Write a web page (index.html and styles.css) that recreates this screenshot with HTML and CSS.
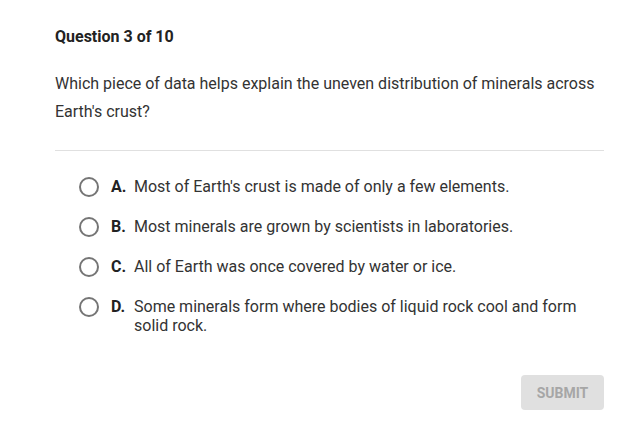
FILE: index.html
```html
<!DOCTYPE html>
<html lang="en">
<head>
    <meta charset="UTF-8">
    <title>Question 3 of 10</title>
    <link rel="stylesheet" href="styles.css">
</head>
<body>
    <div class="quiz">
        <h2 class="quiz-title">Question 3 of 10</h2>
        <p class="quiz-question">Which piece of data helps explain the uneven distribution of minerals across Earth's crust?</p>
        <hr class="divider">
        <ul class="options">
            <li class="option">
                <span class="radio"></span>
                <span class="letter">A.</span>
                <span class="text">Most of Earth's crust is made of only a few elements.</span>
            </li>
            <li class="option">
                <span class="radio"></span>
                <span class="letter">B.</span>
                <span class="text">Most minerals are grown by scientists in laboratories.</span>
            </li>
            <li class="option">
                <span class="radio"></span>
                <span class="letter">C.</span>
                <span class="text">All of Earth was once covered by water or ice.</span>
            </li>
            <li class="option">
                <span class="radio"></span>
                <span class="letter">D.</span>
                <span class="text">Some minerals form where bodies of liquid rock cool and form solid rock.</span>
            </li>
        </ul>
        <div class="actions">
            <button class="btn-submit" disabled>SUBMIT</button>
        </div>
    </div>
</body>
</html>
```

FILE: styles.css
```css
body {
    margin: 0;
    background: #fff;
    font-family: 'Roboto', 'Liberation Sans', sans-serif;
    color: #333;
}
.quiz {
    width: 549px;
    padding: 25px 0 0 55px;
}
.quiz-title {
    margin: 0;
    font-size: 16px;
    line-height: 24px;
    font-weight: 700;
    color: #222;
}
.quiz-question {
    margin: 21px 0 0;
    font-size: 16px;
    line-height: 28px;
}
.divider {
    margin: 24px 0 0;
    border: none;
    border-top: 1px solid #e0e0e0;
}
.options {
    list-style: none;
    margin: 0;
    padding: 26px 0 0 24px;
}
.option {
    display: flex;
    align-items: flex-start;
    font-size: 16px;
    line-height: 20px;
    margin-bottom: 20px;
}
.option:last-child .text {
    line-height: 19px;
}
.radio {
    flex: none;
    width: 16px;
    height: 16px;
    border: 2px solid #757575;
    border-radius: 50%;
    margin: 0 12px 0 0;
}
.letter {
    flex: none;
    width: 23px;
    font-weight: 700;
    color: #222;
}
.text {
    flex: 1;
    padding-right: 20px;
}
.actions {
    display: flex;
    justify-content: flex-end;
    margin-top: 40px;
}
.btn-submit {
    width: 83px;
    height: 35px;
    border: none;
    border-radius: 4px;
    background: #e0e0e0;
    color: #a6a6a6;
    font-family: 'Roboto', 'Liberation Sans', sans-serif;
    font-size: 14px;
    font-weight: 700;
}
```
